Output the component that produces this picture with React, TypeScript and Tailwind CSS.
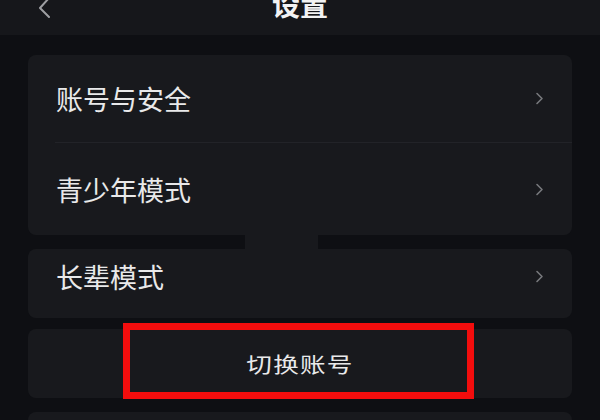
import React from 'react';

const font = { fontFamily: '"Noto Sans CJK SC", "Noto Sans", sans-serif' };

const Chevron: React.FC = () => (
  <svg width="9" height="13" viewBox="0 0 9 13" fill="none" className="shrink-0">
    <polyline points="2,1.5 7,6.5 2,11.5" stroke="#77787c" strokeWidth="1.6" strokeLinecap="round" strokeLinejoin="round" />
  </svg>
);

const Row: React.FC<{ label: string; className?: string }> = ({ label, className }) => (
  <div className={`flex items-center justify-between pl-[28px] pr-[28px] ${className ?? ''}`}>
    <span className="text-[27px] leading-none text-[#e9e9ea]">{label}</span>
    <Chevron />
  </div>
);

const App: React.FC = () => {
  return (
    <div className="relative h-[420px] w-[600px] overflow-hidden bg-[#0e0f13]" style={font}>
      <header className="relative flex h-[35px] justify-center bg-[#16171b]">
        <svg width="20" height="22" viewBox="0 0 20 22" fill="none" className="absolute left-[35px] top-[-4px]">
          <polyline points="14,2 5,12 14,21" stroke="#9d9ea2" strokeWidth="2" strokeLinecap="round" strokeLinejoin="round" />
        </svg>
        <h1 className="mt-[-10px] text-[28px] font-bold leading-[28px] text-[#f2f2f3]">设置</h1>
      </header>

      <main className="flex flex-col px-[28px] pt-[20px]">
        <section className="rounded-[8px] bg-[#18191d]">
          <Row label="账号与安全" className="h-[87px]" />
          <div className="ml-[27px] h-px bg-[#222328]" />
          <Row label="青少年模式" className="h-[92px]" />
        </section>

        <div className="h-[14px]">
          <div className="ml-[217px] h-full w-[73px] bg-[#18191d]" />
        </div>

        <section className="rounded-[8px] bg-[#18191d]">
          <Row label="长辈模式" className="h-[69px] pb-[14px]" />
        </section>

        <section className="mt-[11px] flex h-[69px] items-center justify-center rounded-[8px] bg-[#18191d]">
          <span className="inline-block scale-x-[1.22] text-[21px] leading-none tracking-[1px] text-[#e9e9ea]">切换账号</span>
        </section>

        <section className="mt-[14px] h-[40px] rounded-[8px] bg-[#18191d]" />
      </main>

      <div className="pointer-events-none absolute left-[123px] top-[323px] h-[76px] w-[351px] border-[7px] border-[#f30d0d]" />
    </div>
  );
};

export default App;
